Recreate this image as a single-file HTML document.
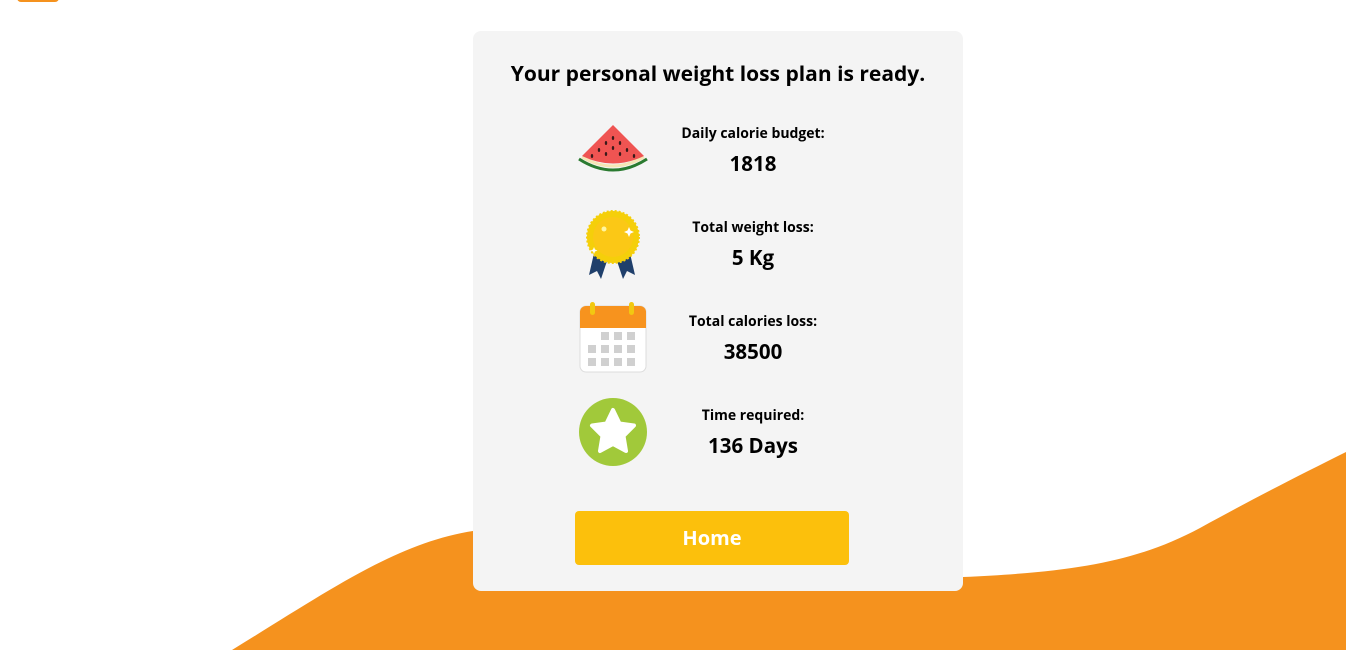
<!DOCTYPE html>
<html><head><meta charset="utf-8"><style>
*{margin:0;padding:0;box-sizing:border-box}
body{width:1346px;height:650px;overflow:hidden;background:#fff;position:relative;font-family:"Open Sans","Liberation Sans",sans-serif;color:#000}
.bar{position:absolute;left:17px;top:-6px;width:42px;height:8px;background:#f5921e;border-radius:4px}
.card{position:absolute;left:473px;top:31px;width:490px;height:560px;background:#f4f4f4;border-radius:8px}
h1{position:absolute;top:29px;left:0;width:490px;text-align:center;font-size:21px;font-weight:bold}
.lab{position:absolute;left:190px;width:180px;text-align:center;font-size:14px;font-weight:bold}
.val{position:absolute;left:190px;width:180px;text-align:center;font-size:20.5px;font-weight:bold}
.ic{position:absolute;left:103px}
.btn{position:absolute;left:102px;top:480px;width:274px;height:54px;background:#fcc00c;border-radius:4px;color:#fff;font-size:20px;font-weight:bold;text-align:center;line-height:54px}
</style></head><body>
<div class="bar"></div>
<svg style="position:absolute;left:0;top:0" width="1346" height="650"><path d="M232,650 C330,590 400,540 480,530 L963,577 C1080,572 1140,560 1200,528 C1260,495 1300,475 1346,452 L1346,650 Z" fill="#f5921e"/></svg>
<div class="card">
<h1>Your personal weight loss plan is ready.</h1>
<svg class="ic" style="top:92px" width="74" height="52" viewBox="0 0 74 52">
<path d="M3,36 Q37,58 71,36" stroke="#2a7a30" stroke-width="3" fill="none"/>
<path d="M6,34 Q37,52 68,34" stroke="#f5e6b5" stroke-width="3" fill="none"/>
<path d="M37,2 L68,33 Q37,48 6,33 Z" fill="#ef5452"/>
<g fill="#3a1a1a"><ellipse cx="37" cy="15" rx="1.2" ry="2"/><ellipse cx="30" cy="20" rx="1.2" ry="2"/><ellipse cx="44" cy="20" rx="1.2" ry="2"/><ellipse cx="23" cy="27" rx="1.2" ry="2"/><ellipse cx="37" cy="25" rx="1.2" ry="2"/><ellipse cx="51" cy="27" rx="1.2" ry="2"/><ellipse cx="30" cy="31" rx="1.2" ry="2"/><ellipse cx="44" cy="31" rx="1.2" ry="2"/><ellipse cx="16" cy="33" rx="1.2" ry="2"/><ellipse cx="58" cy="33" rx="1.2" ry="2"/></g>
</svg>
<div class="lab" style="top:93px">Daily calorie budget:</div>
<div class="val" style="top:119px">1818</div>
<svg class="ic" style="top:178px;left:110px" width="60" height="72" viewBox="0 0 60 72">
<path d="M12,40 L6,66 L14,62 L18,70 L26,46 Z" fill="#1f3f6b"/><path d="M46,40 L52,66 L44,62 L40,70 L32,46 Z" fill="#1f3f6b"/>
<circle cx="30" cy="28" r="26" fill="#f5cf0a" stroke="#f5cf0a" stroke-width="2" stroke-dasharray="2 2"/>
<circle cx="30" cy="28" r="20" fill="#fbc816"/><circle cx="21" cy="20" r="2.5" fill="#fff6a0"/>
<path d="M46,18 l1.5,3.5 3.5,1.5 -3.5,1.5 -1.5,3.5 -1.5,-3.5 -3.5,-1.5 3.5,-1.5z M11,38 l1,2.5 2.5,1 -2.5,1 -1,2.5 -1,-2.5 -2.5,-1 2.5,-1z" fill="#fff"/>
</svg>
<div class="lab" style="top:187px">Total weight loss:</div>
<div class="val" style="top:213px">5 Kg</div>
<svg class="ic" style="top:271px;left:105px" width="70" height="72" viewBox="0 0 70 72">
<rect x="2" y="4" width="66" height="66" rx="6" fill="#fff" stroke="#ddd"/>
<path d="M2,26 V10 a6,6 0 0 1 6,-6 H62 a6,6 0 0 1 6,6 V26 Z" fill="#f7931e"/>
<rect x="12" y="0" width="5" height="13" rx="2.5" fill="#f2c811"/><rect x="51" y="0" width="5" height="13" rx="2.5" fill="#f2c811"/>
<g fill="#d0d0d0"><rect x="23" y="30" width="8" height="8"/><rect x="36" y="30" width="8" height="8"/><rect x="49" y="30" width="8" height="8"/>
<rect x="10" y="43" width="8" height="8"/><rect x="23" y="43" width="8" height="8"/><rect x="36" y="43" width="8" height="8"/><rect x="49" y="43" width="8" height="8"/>
<rect x="10" y="56" width="8" height="8"/><rect x="23" y="56" width="8" height="8"/><rect x="36" y="56" width="8" height="8"/><rect x="49" y="56" width="8" height="8"/></g>
</svg>
<div class="lab" style="top:281px">Total calories loss:</div>
<div class="val" style="top:307px">38500</div>
<svg class="ic" style="top:366px;left:105px" width="70" height="70" viewBox="0 0 70 70">
<circle cx="35" cy="35" r="34" fill="#a1c93a"/>
<path d="M35,13 L41.5,26.5 56,28.5 45.5,39 48,54 35,47 22,54 24.5,39 14,28.5 28.5,26.5 Z" fill="#fff" stroke="#fff" stroke-width="4" stroke-linejoin="round"/>
</svg>
<div class="lab" style="top:375px">Time required:</div>
<div class="val" style="top:401px">136 Days</div>
<div class="btn">Home</div>
</div>
</body></html>
